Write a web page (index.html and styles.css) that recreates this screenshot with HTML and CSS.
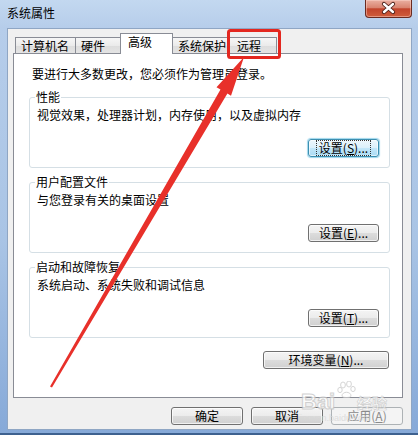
FILE: index.html
```html
<!DOCTYPE html>
<html lang="zh-CN">
<head>
    <meta charset="UTF-8">
    <title>系统属性</title>
    <link rel="stylesheet" href="styles.css">
</head>
<body>
    <div class="window">
        <!-- 标题栏 -->
        <div class="titlebar">
            <span class="title">系统属性</span>
            <div class="close">
                <svg width="45" height="17" viewBox="0 0 45 17">
                    <path d="M18 4 L27 12 M27 4 L18 12" stroke="#4a1f18" stroke-width="4.2" stroke-linecap="round"/>
                    <path d="M18 4 L27 12 M27 4 L18 12" stroke="#ffffff" stroke-width="2.4" stroke-linecap="round"/>
                </svg>
            </div>
        </div>

        <div class="client">
            <!-- 选项卡 -->
            <div class="tabs">
                <div class="tab t1">计算机名</div>
                <div class="tab t2">硬件</div>
                <div class="tab t3 active">高级</div>
                <div class="tab t4">系统保护</div>
                <div class="tab t5">远程</div>
            </div>

            <div class="panel">
                <p class="intro">要进行大多数更改，您必须作为管理员登录。</p>

                <fieldset class="group">
                    <legend>性能</legend>
                    <p>视觉效果，处理器计划，内存使用，以及虚拟内存</p>
                    <div class="row"><button class="btn focus"><span>设置(<u>S</u>)...</span></button></div>
                </fieldset>

                <fieldset class="group">
                    <legend>用户配置文件</legend>
                    <p>与您登录有关的桌面设置</p>
                    <div class="row"><button class="btn">设置(<u>E</u>)...</button></div>
                </fieldset>

                <fieldset class="group">
                    <legend>启动和故障恢复</legend>
                    <p>系统启动、系统失败和调试信息</p>
                    <div class="row"><button class="btn">设置(<u>T</u>)...</button></div>
                </fieldset>

                <div class="row env"><button class="btn wide">环境变量(<u>N</u>)...</button></div>
            </div>

            <!-- 底部按钮 -->
            <div class="actions">
                <button class="btn">确定</button>
                <button class="btn">取消</button>
                <button class="btn disabled">应用(<u>A</u>)</button>
            </div>
        </div>

        <!-- 红色标注 -->
        <svg class="annot" width="418" height="435" viewBox="0 0 418 435">
            <rect x="228.5" y="30.5" width="51" height="27" rx="2" fill="none" stroke="#e3271f" stroke-width="3"/>
            <polygon points="50,386.4 220.5,89.6 216.5,87.2 244,57 231,95.8 227.4,93.6 52,387.6" fill="#e8302a"/>
        </svg>

        <!-- 水印 -->
        <div class="watermark">
            <span class="wm-bai">Bai</span>
            <svg class="wm-paw" width="22" height="18" viewBox="0 0 22 18">
                <g fill="#ffffff" stroke="#c8c8c8" stroke-width="1">
                    <ellipse cx="6" cy="4" rx="2.4" ry="3"/>
                    <ellipse cx="12" cy="3" rx="2.4" ry="3"/>
                    <ellipse cx="3" cy="9" rx="2.2" ry="2.6"/>
                    <ellipse cx="16" cy="8" rx="2.2" ry="2.6"/>
                    <path d="M5 15 C5 10 14 10 14 15 C14 17 5 17 5 15 Z"/>
                </g>
            </svg>
            <span class="wm-jy">经验</span>
            <span class="wm-url">jingyan.baidu.com</span>
        </div>
    </div>
</body>
</html>
```

FILE: styles.css
```css
* {
    margin: 0;
    padding: 0;
    box-sizing: border-box;
}

body {
    width: 418px;
    height: 435px;
    overflow: hidden;
    font-family: "Noto Sans CJK SC", "Liberation Sans", sans-serif;
    font-size: 12px;
    line-height: 14px;
    color: #000;
}

/* 窗口外框 */
.window {
    position: relative;
    width: 418px;
    height: 435px;
    background: linear-gradient(to bottom, #c3d8f0 0, #b6cdea 28px, #a9c4e5 55%, #86a9d8 100%);
    box-shadow: inset 0 -2px 0 #3e618f;
    display: flex;
    flex-direction: column;
}

.titlebar {
    height: 28px;
    display: flex;
    align-items: flex-start;
    padding-left: 7px;
}

.titlebar .title {
    margin-top: 6px;
}

.titlebar .close {
    margin-left: auto;
    margin-right: 6px;
    width: 47px;
    height: 18px;
    border: 1px solid #6a2a20;
    border-top: none;
    border-radius: 0 0 4px 4px;
    background: linear-gradient(to bottom, #eab0a2 0%, #d98470 45%, #c2442c 52%, #cf5d3c 100%);
    box-shadow: inset 0 0 0 1px rgba(255, 220, 210, 0.45);
}

.titlebar .close svg {
    display: block;
}

/* 客户区 */
.client {
    height: 402px;
    margin: 0 6px 0 7px;
    border: 1px solid #8fa6c4;
    background-color: #f0f0f0;
    padding: 4px 8px 0 5px;
}

/* 选项卡 */
.tabs {
    display: flex;
    align-items: flex-end;
    height: 20px;
    margin-left: 2px;
}

.tab {
    height: 16px;
    border: 1px solid #898c95;
    border-bottom: none;
    margin-right: -1px;
    padding-left: 5px;
    line-height: 15px;
    background: linear-gradient(to bottom, #f6f6f6 0%, #ebebeb 50%, #dddddd 51%, #e4e4e4 100%);
}

.tab.t1 { width: 61px; }
.tab.t2 { width: 46px; }
.tab.t4 { width: 58px; }
.tab.t5 { width: 48px; padding-left: 7px; }

.tab.active {
    position: relative;
    z-index: 1;
    width: 53px;
    height: 21px;
    margin-bottom: -1px;
    padding-left: 7px;
    line-height: 15px;
    background: #ffffff;
}

.panel {
    height: 345px;
    border: 1px solid #898c95;
    background-color: #ffffff;
    padding: 0 12px 0 15px;
}

.intro {
    margin-top: 13px;
    margin-left: 3px;
}

/* 分组框 */
.group {
    margin-top: 7px;
    border: 1px solid #d5dfe5;
    border-radius: 3px;
    padding: 4px 10px 10px 7px;
}

.intro + .group {
    margin-top: 9px;
}

.group legend {
    padding: 0 1px;
    margin-left: -2px;
    line-height: 14px;
}

.row {
    display: flex;
    justify-content: flex-end;
}

.group .row {
    margin-top: 17px;
}

.env {
    margin-top: 13px;
    margin-right: 1px;
}

/* 按钮 */
.btn {
    width: 72px;
    height: 18px;
    font-family: inherit;
    font-size: 12px;
    line-height: 14px;
    color: #000;
    border: 1px solid #707070;
    border-radius: 3px;
    background: linear-gradient(to bottom, #f4f4f4 0%, #ececec 48%, #dcdcdc 52%, #d0d0d0 100%);
    box-shadow: inset 0 0 0 1px rgba(255, 255, 255, 0.7);
}

.btn u {
    text-decoration: underline;
}

.btn.wide {
    width: 126px;
}

.group .btn {
    width: 71px;
}

.btn.focus {
    border-color: #3c8fb1;
    background: linear-gradient(to bottom, #ecf6fc 0%, #dcf0fb 48%, #c2e6f9 52%, #aadcf4 100%);
    box-shadow: inset 0 0 0 1px rgba(255, 255, 255, 0.6), 0 0 1px 1px #9ed6ec;
}

.btn.focus span {
    display: inline-block;
    outline: 1px dotted #333;
    padding: 0 2px;
}

.btn.disabled {
    color: #8a8a8a;
    border-color: #adb2b5;
    background: #f4f4f4;
    box-shadow: none;
}

.actions {
    margin-top: 9px;
    display: flex;
    justify-content: flex-end;
    gap: 8px;
}

/* 标注与水印 */
.annot {
    position: absolute;
    top: 0;
    left: 0;
    pointer-events: none;
}

.watermark {
    position: absolute;
    left: 298px;
    top: 380px;
    width: 100px;
    height: 45px;
    opacity: 0.75;
    pointer-events: none;
}

.wm-bai {
    position: absolute;
    left: 3px;
    top: 11px;
    font-family: "Liberation Sans", sans-serif;
    font-weight: bold;
    font-size: 22px;
    line-height: 22px;
    color: #ffffff;
    -webkit-text-stroke: 1px #c4c4c4;
}

.wm-paw {
    position: absolute;
    left: 39px;
    top: 1px;
}

.wm-jy {
    position: absolute;
    left: 59px;
    top: 15px;
    font-size: 15px;
    line-height: 16px;
    font-weight: bold;
    color: #ffffff;
    -webkit-text-stroke: 0.6px #c4c4c4;
}

.wm-url {
    position: absolute;
    left: 0;
    top: 33px;
    font-family: "Liberation Sans", sans-serif;
    font-size: 9px;
    line-height: 10px;
    color: #d6d6d6;
}
```
